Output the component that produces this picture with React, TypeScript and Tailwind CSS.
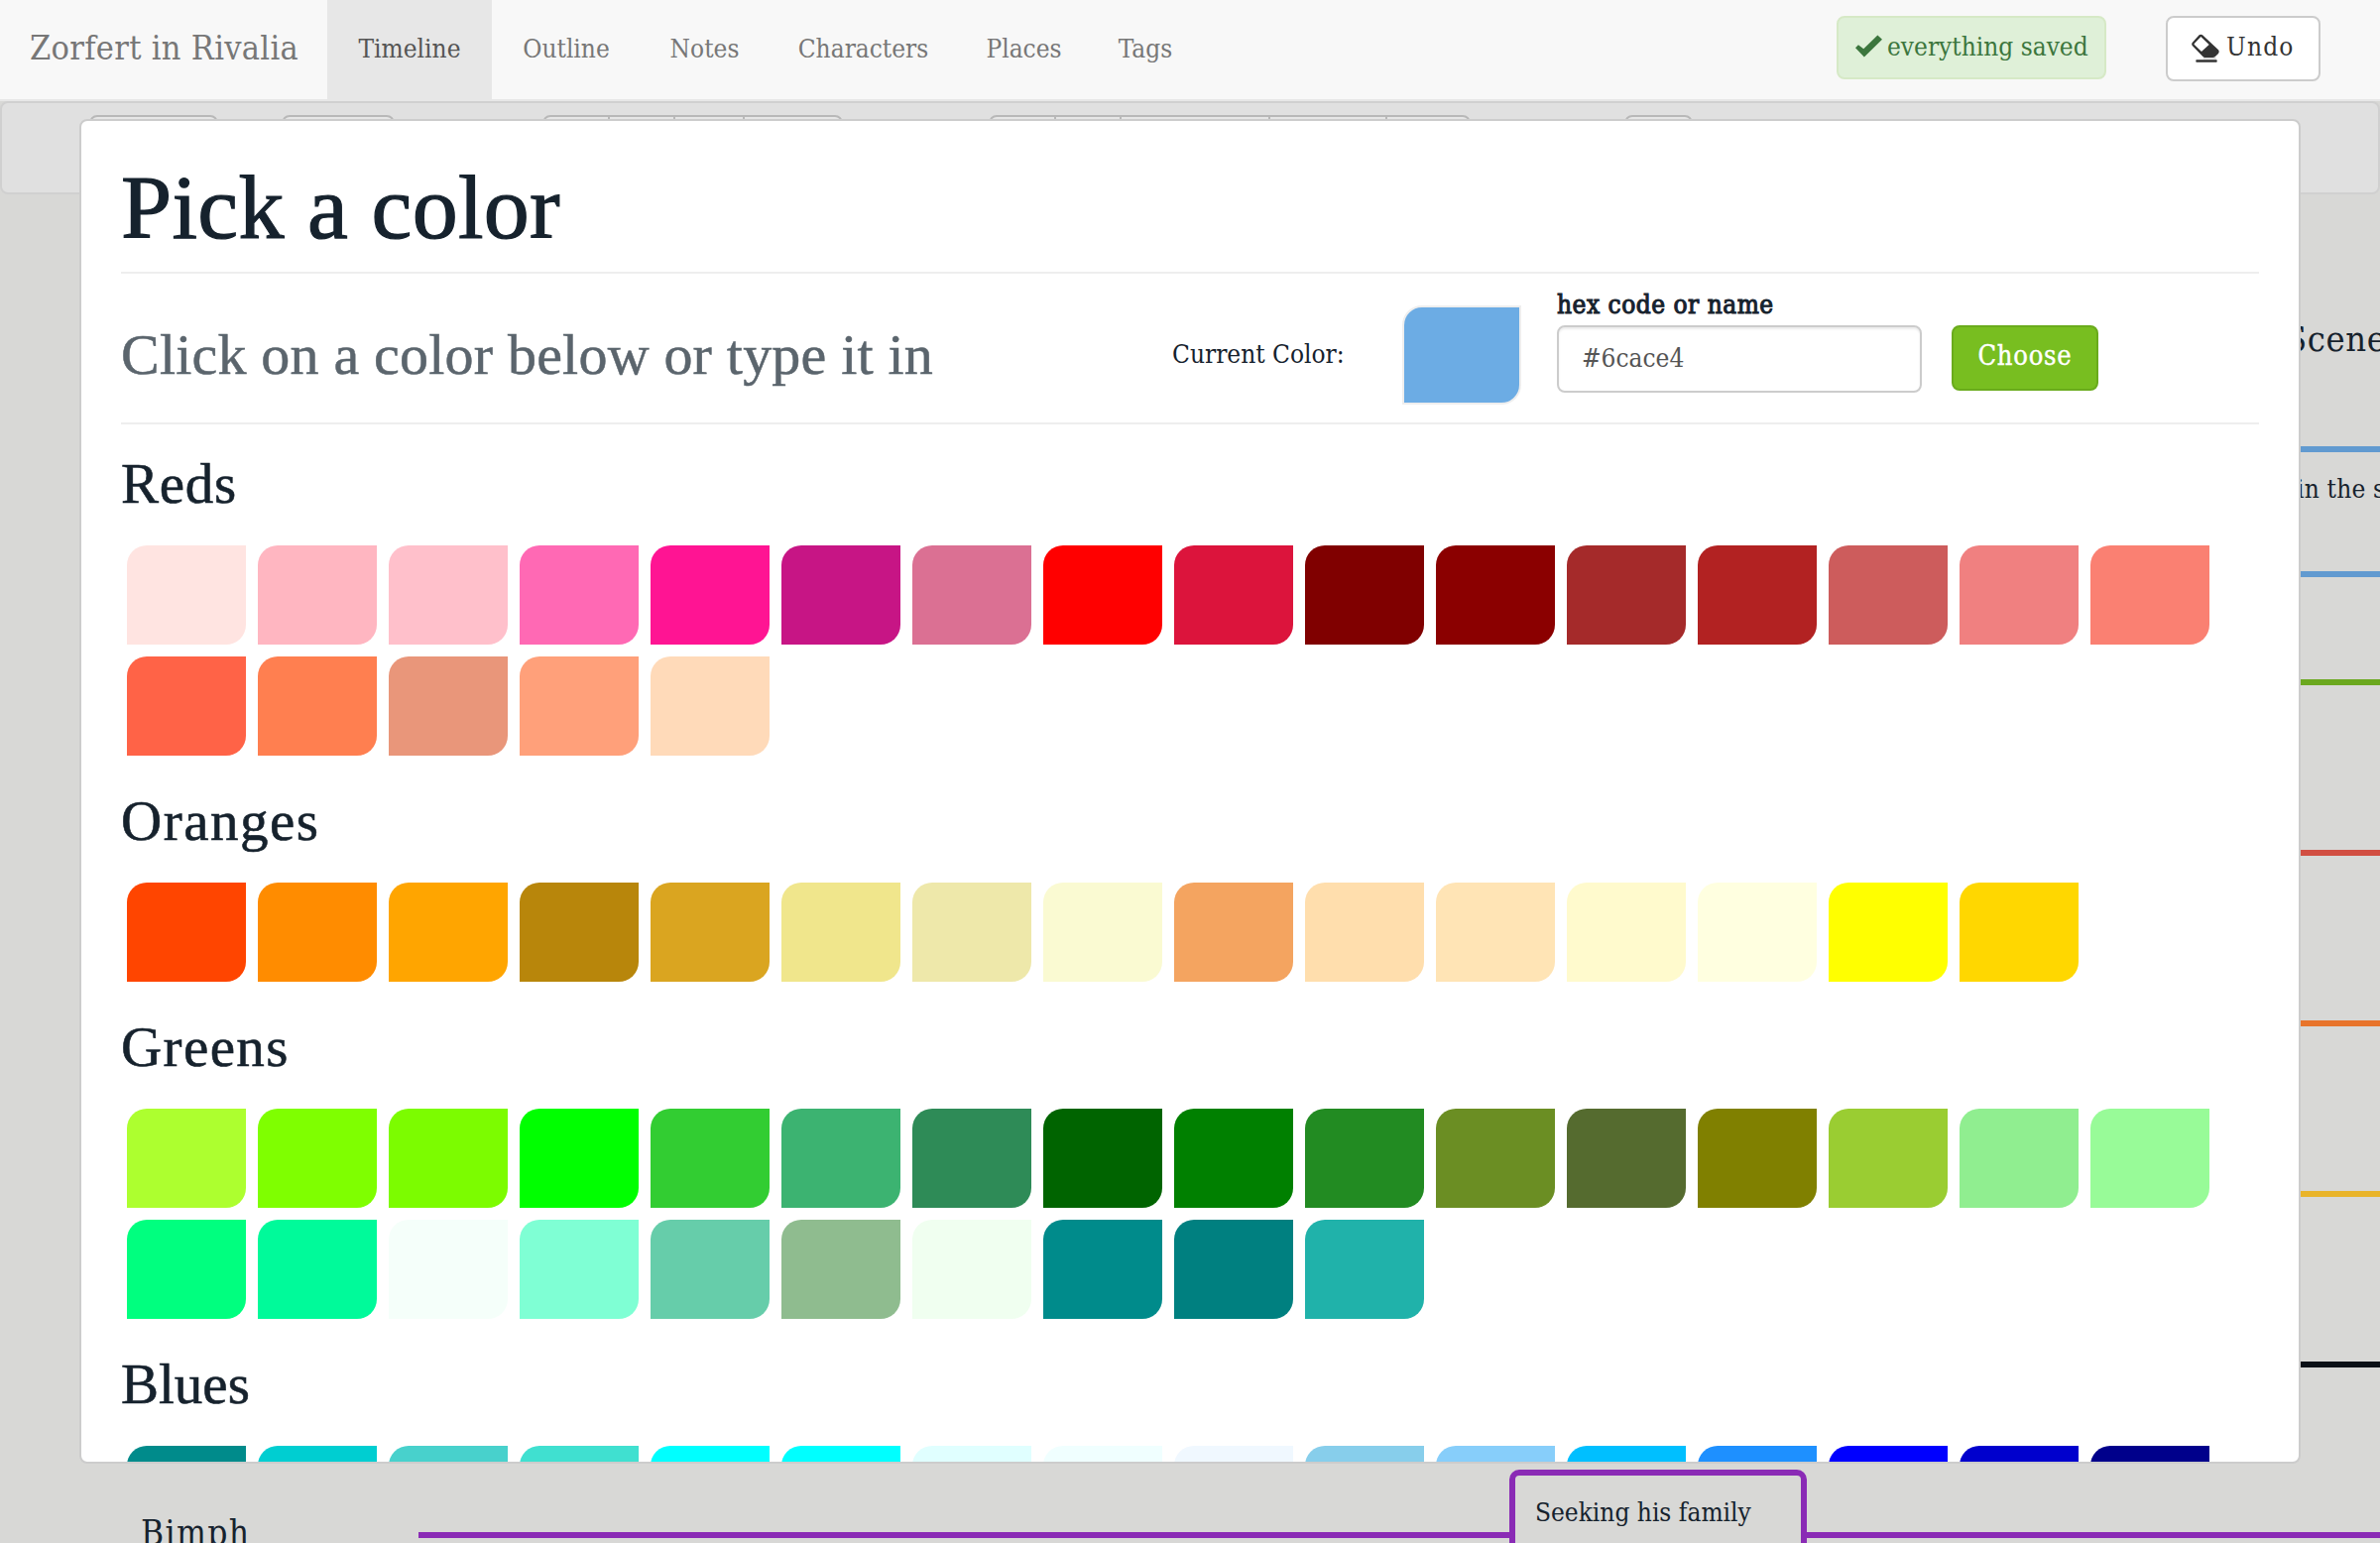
import React from "react";

const REDS = ["mistyrose", "lightpink", "pink", "hotpink", "deeppink", "mediumvioletred", "palevioletred", "red", "crimson", "maroon", "darkred", "brown", "firebrick", "indianred", "lightcoral", "salmon", "tomato", "coral", "darksalmon", "lightsalmon", "peachpuff"];
const ORANGES = ["orangered", "darkorange", "orange", "darkgoldenrod", "goldenrod", "khaki", "palegoldenrod", "lightgoldenrodyellow", "sandybrown", "navajowhite", "moccasin", "lemonchiffon", "lightyellow", "yellow", "gold"];
const GREENS = ["greenyellow", "chartreuse", "lawngreen", "lime", "limegreen", "mediumseagreen", "seagreen", "darkgreen", "green", "forestgreen", "olivedrab", "darkolivegreen", "olive", "yellowgreen", "lightgreen", "palegreen", "springgreen", "mediumspringgreen", "mintcream", "aquamarine", "mediumaquamarine", "darkseagreen", "honeydew", "darkcyan", "teal", "lightseagreen"];
const BLUES = ["darkcyan", "darkturquoise", "mediumturquoise", "turquoise", "cyan", "aqua", "lightcyan", "azure", "aliceblue", "skyblue", "lightskyblue", "deepskyblue", "dodgerblue", "blue", "mediumblue", "darkblue"];

function Section({ title, colors, tracking }: { title: string; colors: string[]; tracking: string }) {
  return (
    <section className="pb-[6px]">
      <h2 className={"flex h-[122px] items-start pt-[27px] font-['Liberation_Serif',serif] text-[57px] leading-[66px] [-webkit-text-stroke:0.6px_#16222d] " + tracking}>{title}</h2>
      <div className="flex w-[2130px] flex-wrap gap-3 pl-[6px]">
        {colors.map((c) => (
          <div key={c} className="h-[100px] w-[120px] rounded-tl-[20px] rounded-br-[20px]" style={{ backgroundColor: c }} />
        ))}
      </div>
    </section>
  );
}

function ButtonGroup({ widths, className }: { widths: string[]; className: string }) {
  return (
    <div className={"flex h-[60px] overflow-hidden rounded-[8px] border-2 border-[#b8b8b8] bg-[#e6e6e6] " + className}>
      {widths.map((w, i) => (
        <div key={i} className={w + " shrink-0 border-r-2 border-[#b8b8b8]"} />
      ))}
    </div>
  );
}

function Check() {
  return (
    <svg viewBox="0 0 82 69" className="mb-[4px] h-[23px] w-[27px]" fill="#3c763d">
      <path d="M0 40 L9 31 L25 43 L68 1 L82 14 L27 68 Z" />
    </svg>
  );
}

function Eraser() {
  return (
    <svg viewBox="0 0 84 87" className="mb-[2px] h-[29px] w-[28px]" fill="#333">
      <path fillRule="evenodd" d="M23 4 Q28 0 33 4 L81 49 Q85 54 81 60 L71 70 Q68 72 64 72 L40 72 Q37 72 34 69 L2 36 Q-1 31 2 27 Z M28 9 L8 30 Q7 32 9 34 L30 54 L53 33 Z" />
      <path d="M36 73 H74 V76 H36 Z" fill="#bbb" />
      <rect x="13" y="79" width="64" height="7" rx="2" />
    </svg>
  );
}

function Rule({ className }: { className: string }) {
  return <div className={"ml-[422px] h-[6px] shrink-0 " + className} />;
}

export default function App() {
  return (
    <div className="relative flex h-[1556px] w-[2400px] flex-col overflow-hidden bg-[#d8d8d6] font-['DejaVu_Serif_Condensed','DejaVu_Serif',serif] text-[#16222d]">
      <header className="flex h-[102px] shrink-0 items-stretch border-b-2 border-[#e7e7e7] bg-[#f8f8f8] text-[26px] text-[#777]">
        <div className="flex w-[330px] items-center pl-[30px] pb-[4px] text-[34px] tracking-[0.3px] whitespace-nowrap">Zorfert in Rivalia</div>
        <nav className="flex grow items-stretch pb-[1px]">
          <a className="-mb-[1px] flex w-[166px] items-center justify-center bg-[#e7e7e7] pb-[1px] text-[#555]">Timeline</a>
          <a className="flex w-[150px] items-center justify-center">Outline</a>
          <a className="flex w-[129px] items-center justify-center">Notes</a>
          <a className="flex w-[191px] items-center justify-center">Characters</a>
          <a className="flex w-[133px] items-center justify-center">Places</a>
          <a className="flex w-[112px] items-center justify-center">Tags</a>
        </nav>
        <div className="mt-4 flex h-[64px] w-[272px] items-center gap-[5px] rounded-[8px] border-2 border-[#d6e9c6] bg-[#dff0d8] pl-[17px] whitespace-nowrap text-[#3c763d]">
          <Check />
          <span className="pb-[2px]">everything saved</span>
        </div>
        <div className="mt-4 mr-[60px] ml-[60px] flex h-[66px] w-[156px] items-center gap-[7px] rounded-[8px] border-2 border-[#ccc] bg-white pl-[24px] text-[#333]">
          <Eraser />
          <span className="pb-[4px] tracking-[1.2px]">Undo</span>
        </div>
      </header>

      <div className="flex h-[94px] shrink-0 items-start rounded-[8px] border-2 border-[#d0d0d0] bg-[#e0e0e0] pt-3 pl-[88px]">
        <ButtonGroup widths={[]} className="w-[130px]" />
        <ButtonGroup widths={[]} className="ml-[64px] w-[114px]" />
        <ButtonGroup widths={["w-[66px]", "w-[66px]", "w-[70px]"]} className="ml-[149px] w-[303px]" />
        <ButtonGroup widths={["w-[66px]", "w-[66px]", "w-[150px]", "w-[118px]"]} className="ml-[147px] w-[486px]" />
        <ButtonGroup widths={[]} className="ml-[155px] w-[69px]" />
      </div>

      <main className="flex grow flex-col overflow-hidden">
        <div className="ml-[2304px] flex h-[254px] shrink-0 items-start pt-[124px] text-[36px] leading-[44px] tracking-[0.6px] whitespace-nowrap">Scene 8</div>
        <Rule className="bg-[#619ad0]" />
        <div className="ml-[2316px] h-[120px] shrink-0 pt-[20px] text-[26px] leading-[34px] tracking-[0.2px] whitespace-nowrap">in the snow</div>
        <Rule className="bg-[#619ad0]" />
        <Rule className="mt-[103px] bg-[#6ba81f]" />
        <Rule className="mt-[166px] bg-[#d14e42]" />
        <Rule className="mt-[166px] bg-[#e8742b]" />
        <Rule className="mt-[166px] bg-[#e9b42a]" />
        <Rule className="mt-[166px] bg-[#0a1016]" />
        <div className="flex h-[177px] shrink-0 items-start pt-[103px]">
          <div className="w-[422px] shrink-0 pt-[41px] pl-[142px] text-[35px] leading-[46px] tracking-[1.4px]">Bimph</div>
          <div className="mt-[63px] h-[6px] w-[1100px] shrink-0 bg-[#8a2bb5]" />
          <div className="h-[120px] w-[300px] shrink-0 rounded-[10px] border-[6px] border-[#8a2bb5] pt-[20px] pl-[20px] text-[26px] leading-[34px]">Seeking his family</div>
          <div className="mt-[63px] h-[6px] grow bg-[#8a2bb5]" />
        </div>
      </main>

      <div className="absolute top-[120px] left-[80px] flex h-[1356px] w-[2240px] flex-col overflow-hidden rounded-[8px] border-2 border-[#ccc] bg-white px-[40px]">
        <h1 className="h-[154px] shrink-0 border-b-2 border-[#eee] pt-[35px] font-['Liberation_Serif',serif] text-[92px] leading-[104px] tracking-[0.3px] [-webkit-text-stroke:1.2px_#16222d]">Pick a color</h1>
        <div className="flex h-[152px] shrink-0 items-start border-b-2 border-[#eee] text-[26px]">
          <h2 className="w-[1060px] pt-[49px] font-['Liberation_Serif',serif] text-[58px] leading-[66px] tracking-[0.2px] text-[#5b656d] [-webkit-text-stroke:0.5px_#5b656d]">Click on a color below or type it in</h2>
          <div className="w-[232px] pt-[64px] leading-[34px]">Current Color:</div>
          <div className="mt-[32px] h-[100px] w-[120px] rounded-tl-[20px] rounded-br-[20px] border-2 border-[#eee] bg-[#6cace4]" />
          <div className="ml-[36px] w-[369px] pt-[14px]">
            <div className="h-[38px] leading-[34px] tracking-[0.5px] [-webkit-text-stroke:1px_#16222d]">hex code or name</div>
            <div className="flex h-[68px] w-[368px] items-center rounded-[8px] border-2 border-[#ccc] bg-white pb-[2px] pl-[23px] text-[#555] shadow-[inset_0_2px_2px_rgba(0,0,0,0.075)]">#6cace4</div>
          </div>
          <div className="mt-[52px] ml-[29px] flex h-[66px] w-[148px] items-center justify-center rounded-[8px] border-2 border-[#6aab1c] bg-[#78be20] pb-[3px] text-[27px] tracking-[0.8px] text-white [-webkit-text-stroke:0.4px_white]">Choose</div>
        </div>
        <Section title="Reds" colors={REDS} tracking="tracking-[0.7px]" />
        <Section title="Oranges" colors={ORANGES} tracking="tracking-[1.5px]" />
        <Section title="Greens" colors={GREENS} tracking="tracking-[1.4px]" />
        <Section title="Blues" colors={BLUES} tracking="tracking-[0px]" />
      </div>
    </div>
  );
}
